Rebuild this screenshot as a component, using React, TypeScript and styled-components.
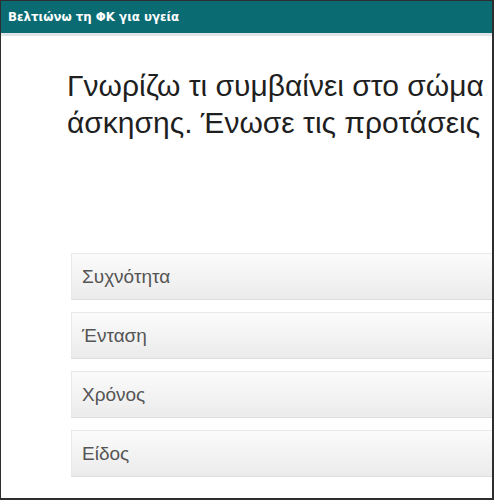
import React from "react";
import styled, { createGlobalStyle } from "styled-components";

const GlobalStyle = createGlobalStyle`
  html, body {
    margin: 0;
    padding: 0;
    background: #ffffff;
  }
`;

const Frame = styled.div`
  box-sizing: border-box;
  width: 494px;
  height: 500px;
  overflow: hidden;
  border-style: solid;
  border-color: #2e2e2e;
  border-width: 1px 2px 2px 1px;
  background: #ffffff;
  display: flex;
  flex-direction: column;
`;

const Header = styled.header`
  flex: none;
  height: 32px;
  background: #0b6b73;
  display: flex;
  align-items: center;
  padding-left: 7px;
  border-bottom: 3px solid #dfe4e6;
  font-family: "DejaVu Sans", Verdana, sans-serif;
  font-weight: bold;
  font-size: 11.8px;
  color: #ffffff;
  white-space: nowrap;
`;

const Content = styled.main`
  flex: 1;
  display: flex;
  flex-direction: column;
  padding: 31px 0 0 66px;
`;

const Title = styled.h1`
  margin: 0;
  font-family: "Liberation Sans", Arial, sans-serif;
  font-weight: normal;
  font-size: 30px;
  line-height: 37px;
  color: #1f1f1f;
  white-space: nowrap;
`;

const Options = styled.ul`
  list-style: none;
  margin: 112px 0 0 4px;
  padding: 0;
  display: flex;
  flex-direction: column;
  gap: 12px;
`;

const Option = styled.li`
  box-sizing: border-box;
  width: 480px;
  height: 47px;
  display: flex;
  align-items: center;
  padding-left: 10px;
  background: linear-gradient(to bottom, #fbfbfb 0%, #f3f3f3 50%, #ebebeb 100%);
  border: 1px solid #e9e9e9;
  border-bottom-color: #dedede;
  font-family: "Liberation Sans", Arial, sans-serif;
  font-size: 19px;
  color: #555555;
`;

const options = ["Συχνότητα", "Ένταση", "Χρόνος", "Είδος"];

export default function App() {
  return (
    <>
      <GlobalStyle />
      <Frame>
        <Header>Βελτιώνω τη ΦΚ για υγεία</Header>
        <Content>
          <Title>
            Γνωρίζω τι συμβαίνει στο σώμα
            <br />
            άσκησης. Ένωσε τις προτάσεις
          </Title>
          <Options>
            {options.map((o) => (
              <Option key={o}>{o}</Option>
            ))}
          </Options>
        </Content>
      </Frame>
    </>
  );
}
